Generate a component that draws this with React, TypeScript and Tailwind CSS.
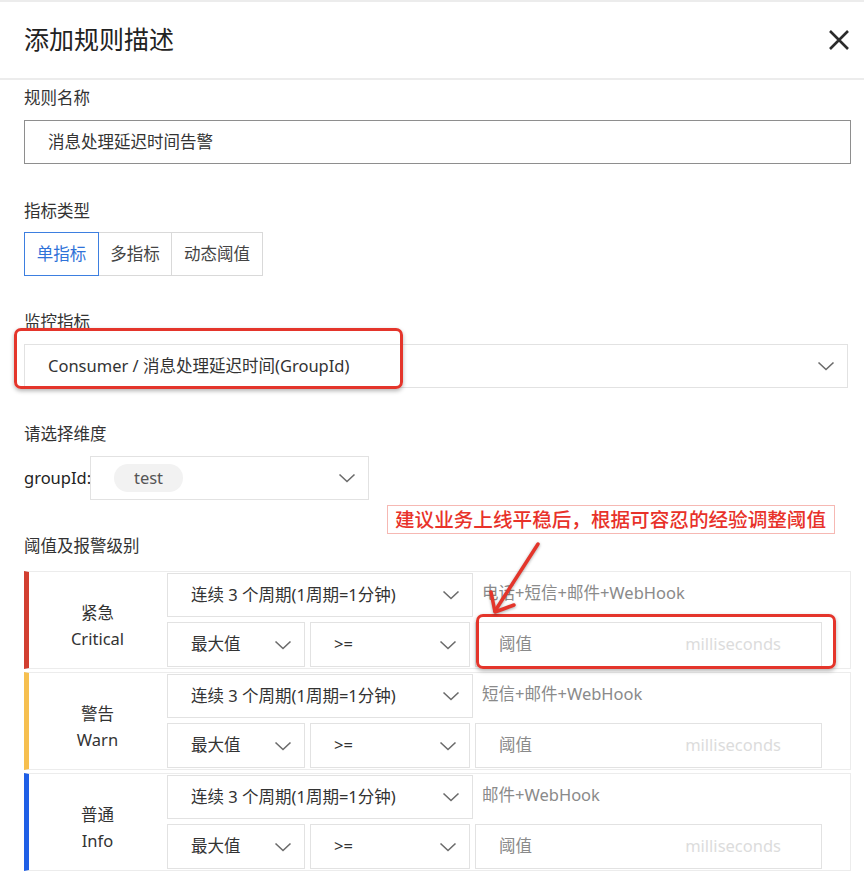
import React from 'react'

const FONT = '"Noto Sans", "Noto Sans CJK SC", sans-serif'

const LEVELS = [
  { zh: '紧急', en: 'Critical', bar: 'border-l-[#d23f31]', notify: '电话+短信+邮件+WebHook' },
  { zh: '警告', en: 'Warn', bar: 'border-l-[#f6bf4f]', notify: '短信+邮件+WebHook' },
  { zh: '普通', en: 'Info', bar: 'border-l-[#1f5fe6]', notify: '邮件+WebHook' }
]

function Chevron() {
  return (
    <svg width="18" height="10" viewBox="0 0 18 10" className="shrink-0">
      <polyline points="1.5,1.5 9,8.5 16.5,1.5" fill="none" stroke="#6b6b6b" strokeWidth="1.6" />
    </svg>
  )
}

function Select({ children, className }: { children: React.ReactNode; className: string }) {
  return (
    <div
      className={
        'flex items-center justify-between border border-[#e2e2e2] bg-white pl-[23px] pr-[12px] text-[16.5px] text-[#333] ' +
        className
      }
    >
      <span>{children}</span>
      <Chevron />
    </div>
  )
}

function Label({ children }: { children: React.ReactNode }) {
  return <div className="h-6 text-[16.5px] leading-6 text-[#333]">{children}</div>
}

function LevelRow({ level }: { level: (typeof LEVELS)[number] }) {
  return (
    <div className={'flex h-[98px] border border-[#ececec] border-l-[5px] ' + level.bar}>
      <div className="flex w-[137px] shrink-0 flex-col items-center justify-center pt-[11px] text-[16.5px] leading-[26px] text-[#333]">
        <span>{level.zh}</span>
        <span>{level.en}</span>
      </div>
      <div className="flex flex-1 flex-col gap-[5px] py-[1px] pl-[1px]">
        <div className="flex h-[44px]">
          <Select className="w-[306px]">连续 3 个周期(1周期=1分钟)</Select>
          <div className="pl-[9px] pt-[8px] text-[16.5px] leading-6 text-[#8a8a8a]">{level.notify}</div>
        </div>
        <div className="flex h-[45px] gap-[5px]">
          <Select className="w-[138px]">最大值</Select>
          <Select className="w-[160px]">&gt;=</Select>
          <div className="flex w-[347px] items-center justify-between border border-[#e2e2e2] pl-[23px] pr-[40px] text-[16.5px]">
            <span className="text-[#8a8a8a]">阈值</span>
            <span className="text-[#dcdcdc]">milliseconds</span>
          </div>
        </div>
      </div>
    </div>
  )
}

export default function App() {
  return (
    <div className="relative h-[885px] w-[864px] overflow-hidden bg-white" style={{ fontFamily: FONT }}>
      {/* header */}
      <div className="flex h-[80px] items-center justify-between border-t-2 border-b-2 border-[#ececec] pl-[24px] pr-[14px]">
        <h1 className="text-[25px] font-normal text-[#222]">添加规则描述</h1>
        <svg width="22" height="22" viewBox="0 0 22 22">
          <path d="M2 2 L20 20 M20 2 L2 20" stroke="#2b2b2b" strokeWidth="2.6" />
        </svg>
      </div>

      <div className="flex flex-col pl-[24px] pr-[13px] pt-[6px]">
        <Label>规则名称</Label>
        <div className="mt-[10px] flex h-[44px] items-center border border-[#8e8e8e] pl-[23px] text-[16.5px] text-[#333]">
          消息处理延迟时间告警
        </div>

        <div className="mt-[35px]">
          <Label>指标类型</Label>
        </div>
        <div className="mt-[9px] flex h-[44px] text-[16.5px]">
          <div className="flex w-[75px] items-center justify-center border border-[#3d7fe0] text-[#2f72d8]">单指标</div>
          <div className="flex w-[73px] items-center justify-center border border-l-0 border-[#d9d9d9] text-[#444]">多指标</div>
          <div className="flex w-[91px] items-center justify-center border border-l-0 border-[#d9d9d9] text-[#444]">动态阈值</div>
        </div>

        <div className="mt-[34px]">
          <Label>监控指标</Label>
        </div>
        <Select className="mt-[10px] mr-[3px] h-[44px]">Consumer / 消息处理延迟时间(GroupId)</Select>

        <div className="mt-[34px]">
          <Label>请选择维度</Label>
        </div>
        <div className="mt-[10px] flex h-[44px] items-center">
          <span className="w-[66px] text-[16.5px] text-[#222]">groupId:</span>
          <div className="flex h-full w-[279px] items-center justify-between border border-[#e2e2e2] pl-[23px] pr-[12px]">
            <span className="flex h-[28px] w-[69px] items-center justify-center rounded-full bg-[#f2f2f2] text-[16.5px] text-[#555]">
              test
            </span>
            <Chevron />
          </div>
        </div>

        <div className="mt-[34px]">
          <Label>阈值及报警级别</Label>
        </div>
        <div className="mt-[13px] flex flex-col gap-[3px]">
          {LEVELS.map((l) => (
            <LevelRow key={l.en} level={l} />
          ))}
        </div>
      </div>

      {/* annotations drawn over the form */}
      <div className="pointer-events-none absolute left-[14px] top-[328px] h-[61px] w-[389px] rounded-[7px] border-[3.5px] border-[#e4352b] shadow-[0_2px_4px_rgba(0,0,0,0.3)]" />
      <div className="pointer-events-none absolute left-[476px] top-[614px] h-[55px] w-[360px] rounded-[7px] border-[3.5px] border-[#e4352b] shadow-[0_2px_4px_rgba(0,0,0,0.3)]" />
      <div className="absolute left-[387px] top-[505px] flex h-[29px] w-[448px] items-center border border-[#f6b8b3] bg-white pl-[7px] text-[19.6px] font-medium text-[#e8322a]">
        建议业务上线平稳后，根据可容忍的经验调整阈值
      </div>
      <svg className="pointer-events-none absolute left-0 top-0" width="864" height="885">
        <g stroke="#e4352b" strokeWidth="3.5" strokeLinecap="round" strokeLinejoin="round" fill="none" style={{ filter: 'drop-shadow(0 1px 1.5px rgba(0,0,0,0.35))' }}>
          <path d="M538 544 L495 611" />
          <path d="M491 592 L495 612 L514 605" />
        </g>
      </svg>
    </div>
  )
}
